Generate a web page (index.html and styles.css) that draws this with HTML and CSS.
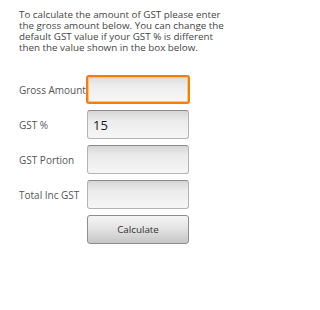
FILE: index.html
```html
<!DOCTYPE html>
<html>
<head>
<meta charset="utf-8">
<link rel="stylesheet" href="styles.css">
</head>
<body>
<div class="screen">
  <p class="intro">To calculate the amount of GST please enter<br>the gross amount below. You can change the<br>default GST value if your GST % is different<br>then the value shown in the box below.</p>
  <div class="form">
    <label class="label">Gross Amount</label>
    <div class="field focused"></div>
    <label class="label">GST %</label>
    <div class="field"><span class="value">15</span></div>
    <label class="label">GST Portion</label>
    <div class="field"></div>
    <label class="label">Total Inc GST</label>
    <div class="field"></div>
    <span class="spacer"></span>
    <div class="button">Calculate</div>
  </div>
</div>
</body>
</html>
```
FILE: styles.css
```css
html, body {
  margin: 0;
  padding: 0;
  background: #ffffff;
}
.screen {
  width: 246px;
  height: 310px;
  font-family: "Open Sans", "Noto Sans", "DejaVu Sans", sans-serif;
  padding-top: 9px;
  box-sizing: border-box;
}
.intro {
  margin: 0 0 22px 19px;
  font-size: 9.8px;
  line-height: 11px;
  color: #444444;
  white-space: nowrap;
}
.form {
  display: grid;
  grid-template-columns: 67px 104px;
  grid-auto-rows: 29px;
  row-gap: 6px;
  padding-left: 19px;
}
.label {
  display: flex;
  align-items: center;
  font-size: 10px;
  color: #555555;
  white-space: nowrap;
}
.field {
  box-sizing: border-box;
  margin: 0 1px 0 1px;
  border: 1px solid #b4b4b4;
  border-top-color: #8a8a8a;
  border-radius: 3px;
  background: linear-gradient(#d6d6d6 0%, #ebebeb 35%, #f6f6f6 100%);
  display: flex;
  align-items: center;
  padding-left: 5px;
}
.field.focused {
  margin: 0;
  border: 2px solid #f57d0a;
  box-shadow: inset 0 0 0 1px #ffc27a;
  background: linear-gradient(#dcdcdc 0%, #ededed 35%, #f7f7f7 100%);
}
.value {
  font-size: 13px;
  color: #1a1a1a;
}
.button {
  box-sizing: border-box;
  margin: 0 1px 0 1px;
  border: 1px solid #8e8e8e;
  border-radius: 3px;
  background: linear-gradient(#f4f4f4 0%, #e4e4e4 45%, #c6c6c6 100%);
  display: flex;
  align-items: center;
  justify-content: center;
  font-size: 9.8px;
  color: #333333;
}
```
